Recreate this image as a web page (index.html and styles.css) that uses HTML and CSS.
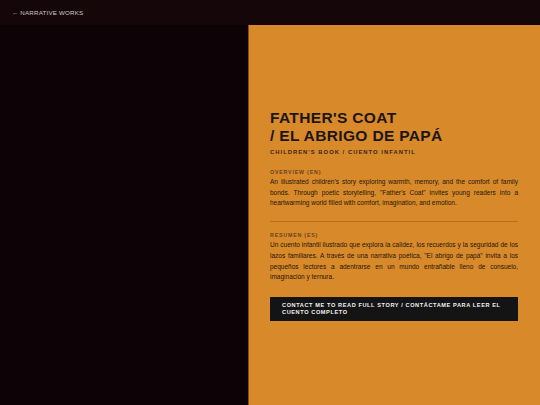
FILE: index.html
```html
<!DOCTYPE html>
<html lang="en">
<head>
    <meta charset="UTF-8">
    <meta name="viewport" content="width=device-width, initial-scale=1.0">
    <title>Father's Coat / El abrigo de papá</title>
    <link rel="stylesheet" href="styles.css">
</head>
<body>
    <header class="top-bar">
        <a class="back-link" href="#">&larr; NARRATIVE WORKS</a>
    </header>

    <main class="work">
        <div class="work-cover"></div>

        <section class="work-info">
            <h1 class="work-title">FATHER'S COAT<br>/ EL ABRIGO DE PAPÁ</h1>
            <div class="work-type">CHILDREN'S BOOK / CUENTO INFANTIL</div>

            <div class="summary">
                <div class="summary-label">OVERVIEW (EN)</div>
                <p>An illustrated children's story exploring warmth, memory, and the comfort of family bonds. Through poetic storytelling, "Father's Coat" invites young readers into a heartwarming world filled with comfort, imagination, and emotion.</p>
            </div>

            <div class="summary summary-es">
                <div class="summary-label">RESUMEN (ES)</div>
                <p>Un cuento infantil ilustrado que explora la calidez, los recuerdos y la seguridad de los lazos familiares. A través de una narrativa poética, "El abrigo de papá" invita a los pequeños lectores a adentrarse en un mundo entrañable lleno de consuelo, imaginación y ternura.</p>
            </div>

            <a class="contact-button" href="#">CONTACT ME TO READ FULL STORY / CONTÁCTAME PARA LEER EL CUENTO COMPLETO</a>
        </section>
    </main>
</body>
</html>
```

FILE: styles.css
```css
body {
    font-family: "Liberation Sans", Arial, sans-serif;
    margin: 0;
    padding: 0;
    background-color: #0d0306;
    height: 405px;
    display: flex;
    flex-direction: column;
}

.top-bar {
    height: 25px;
    background-color: #15060a;
    display: flex;
    align-items: center;
    padding-left: 12px;
    flex-shrink: 0;
}

.back-link {
    color: #cfc6c8;
    font-size: 6.2px;
    letter-spacing: 0.2px;
    text-decoration: none;
}

.work {
    flex: 1;
    display: flex;
}

.work-cover {
    width: 248px;
    background-color: #0d0306;
}

/* orange details panel, content centered vertically */
.work-info {
    flex: 1;
    background-color: #d8892a;
    border-left: 1px solid #8a4a1c;
    padding: 0 22px 0 21px;
    display: flex;
    flex-direction: column;
    justify-content: center;
    color: #1e1208;
}

.work-title {
    font-size: 15.5px;
    line-height: 18px;
    font-weight: bold;
    letter-spacing: 0.35px;
    margin: 0;
    color: #1c1510;
}

.work-type {
    font-size: 5.8px;
    font-weight: bold;
    letter-spacing: 1.05px;
    color: #3a2612;
    margin-top: 4px;
}

.summary {
    margin-top: 14px;
}

.summary-es {
    margin-top: 12px;
    padding-top: 10px;
    border-top: 1px solid #b8701f;
}

.summary-label {
    font-size: 5.3px;
    font-weight: bold;
    letter-spacing: 0.8px;
    color: #6b4320;
}

.summary p {
    font-size: 6.5px;
    line-height: 10.8px;
    text-align: justify;
    margin: 2px 0 0 0;
    color: #24160a;
}

.contact-button {
    display: block;
    margin-top: 14px;
    padding: 5px 6px 5px 12px;
    background-color: #141414;
    color: #f2f2f2;
    font-size: 5.6px;
    line-height: 7px;
    font-weight: bold;
    letter-spacing: 0.6px;
    text-decoration: none;
}
```
